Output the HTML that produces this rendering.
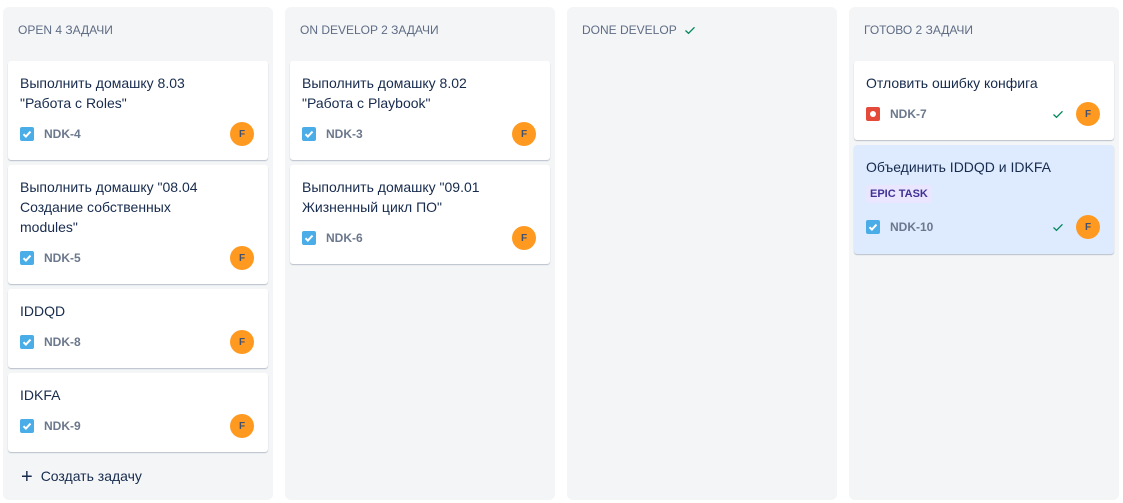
<!DOCTYPE html>
<html><head><meta charset="utf-8"><style>
*{box-sizing:border-box;margin:0;padding:0}
body{width:1123px;height:503px;background:#fff;font-family:"Liberation Sans","DejaVu Sans",sans-serif;position:relative;overflow:hidden}
.col{position:absolute;top:7px;width:270px;height:493px;background:#f4f5f7;border-radius:6px}
.hd{position:absolute;left:15px;top:16px;font-size:12px;color:#5e6c84;letter-spacing:0}
.cards{position:absolute;left:5px;top:54px;width:260px}
.card{background:#fff;border-radius:3px;box-shadow:0 1px 1px rgba(9,30,66,.25);padding:12px 12px 14px 12px;margin-bottom:5px;position:relative}
.card.sel{background:#deebff}
.t{font-size:14px;line-height:20px;color:#172b4d}
.row{height:24px;margin-top:9px;display:flex;align-items:center;position:relative}
.ic{width:14px;height:14px;border-radius:2px;background:#4bade8;display:flex;align-items:center;justify-content:center}
.ic.bug{background:#e5493a}
.ic.bug:after{content:"";width:6px;height:6px;border-radius:50%;background:#fff}
.key{margin-left:10px;font-size:12px;font-weight:bold;color:#6b778c}
.av{position:absolute;right:2px;top:0;width:24px;height:24px;border-radius:50%;background:#ff991f;color:#42526e;font-size:10px;font-weight:bold;display:flex;align-items:center;justify-content:center}
.ok{position:absolute;right:38px;top:6px}
.epic{display:inline-block;margin-top:8px;background:#eae6ff;color:#403294;font-size:11px;font-weight:bold;padding:3px 4px;border-radius:3px;line-height:12px}
.create{position:absolute;left:18px;top:459px;font-size:14px;color:#172b4d}
</style></head><body>
<svg width="0" height="0" style="position:absolute"><defs>
<symbol id="chk" viewBox="0 0 14 14"><path d="M3.5 7.2l2.4 2.4 4.6-5" stroke="#fff" stroke-width="2" fill="none"/></symbol>
<symbol id="gk" viewBox="0 0 12 12"><path d="M1.5 6.5l3 2.8 6-6" stroke="#00875a" stroke-width="1.3" fill="none"/></symbol>
</defs></svg>

<div class="col" style="left:3px"><div class="hd">OPEN 4 ЗАДАЧИ</div>
<div class="cards">
<div class="card"><div class="t">Выполнить домашку 8.03<br>"Работа с Roles"</div><div class="row"><span class="ic"><svg width="14" height="14"><use href="#chk"/></svg></span><span class="key">NDK-4</span><span class="av">F</span></div></div>
<div class="card"><div class="t">Выполнить домашку "08.04<br>Создание собственных<br>modules"</div><div class="row"><span class="ic"><svg width="14" height="14"><use href="#chk"/></svg></span><span class="key">NDK-5</span><span class="av">F</span></div></div>
<div class="card"><div class="t">IDDQD</div><div class="row"><span class="ic"><svg width="14" height="14"><use href="#chk"/></svg></span><span class="key">NDK-8</span><span class="av">F</span></div></div>
<div class="card"><div class="t">IDKFA</div><div class="row"><span class="ic"><svg width="14" height="14"><use href="#chk"/></svg></span><span class="key">NDK-9</span><span class="av">F</span></div></div>
</div>
<div class="create"><span style="font-size:20px;font-weight:300;vertical-align:-2px;margin-right:8px">+</span>Создать задачу</div>
</div>

<div class="col" style="left:285px"><div class="hd">ON DEVELOP 2 ЗАДАЧИ</div>
<div class="cards">
<div class="card"><div class="t">Выполнить домашку 8.02<br>"Работа с Playbook"</div><div class="row"><span class="ic"><svg width="14" height="14"><use href="#chk"/></svg></span><span class="key">NDK-3</span><span class="av">F</span></div></div>
<div class="card"><div class="t">Выполнить домашку "09.01<br>Жизненный цикл ПО"</div><div class="row"><span class="ic"><svg width="14" height="14"><use href="#chk"/></svg></span><span class="key">NDK-6</span><span class="av">F</span></div></div>
</div></div>

<div class="col" style="left:567px"><div class="hd">DONE DEVELOP <svg width="12" height="12" style="margin-left:4px;vertical-align:-2px"><use href="#gk"/></svg></div></div>

<div class="col" style="left:849px"><div class="hd">ГОТОВО 2 ЗАДАЧИ</div>
<div class="cards">
<div class="card" style="padding-bottom:14px"><div class="t">Отловить ошибку конфига</div><div class="row" style="margin-top:9px"><span class="ic bug"></span><span class="key">NDK-7</span><svg class="ok" width="12" height="12"><use href="#gk"/></svg><span class="av">F</span></div></div>
<div class="card sel" style="padding-bottom:15px"><div class="t">Объединить IDDQD и IDKFA</div><span class="epic">EPIC TASK</span><div class="row" style="margin-top:12px"><span class="ic"><svg width="14" height="14"><use href="#chk"/></svg></span><span class="key">NDK-10</span><svg class="ok" width="12" height="12"><use href="#gk"/></svg><span class="av">F</span></div></div>
</div></div>
</body></html>
